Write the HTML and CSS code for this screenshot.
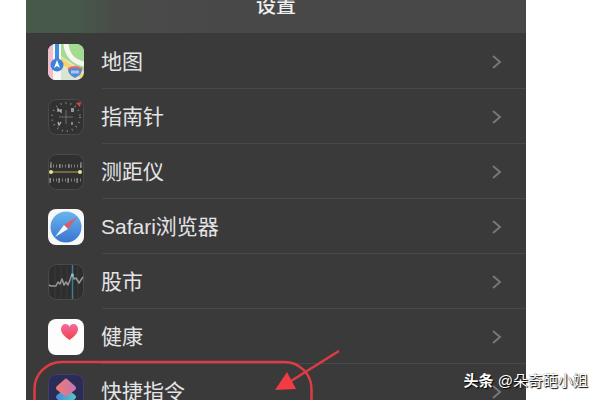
FILE: index.html
```html
<!DOCTYPE html>
<html lang="zh-CN">
  <head>
    <meta charset="utf-8" />
    <meta name="viewport" content="width=device-width, initial-scale=1" />
    <title>设置</title>
    <link rel="stylesheet" href="styles.css">
  </head>
  <body>
    <main class="phone">
      <header class="navbar">
        <h1>设置</h1>
      </header>
      <ul class="settings">
        <li>
          <a href="#maps">
            <svg class="icon" viewBox="0 0 36 36">
              <defs>
                <clipPath id="tile"><rect width="36" height="36" rx="8" /></clipPath>
              </defs>
              <g clip-path="url(#tile)">
                <rect width="36" height="36" fill="#e9e6de" />
                <path d="M13 0H36V28L13 12Z" fill="#a5db91" />
                <path d="M18 0C19 11 26 18 36 20" fill="none" stroke="#f7f7f2" stroke-width="5" />
                <path d="M0 4V36H5V0Z" fill="#f1bdcb" />
                <path d="M13 13L36 31V36L12 19Z" fill="#f5d568" />
                <path d="M13 20L30 36H13Z" fill="#d8e5d2" />
                <path d="M5 0H13V36H5Z" fill="#f6f6f6" />
                <path d="M7 0H11V18H7Z" fill="#3f8be0" />
                <circle cx="9" cy="21" r="6.5" fill="#3b83d9" />
                <path d="M9 16L12 24L9 22L6 24Z" fill="#fff" />
                <path d="M20 25Q27 22 34 25Q34 31 27 34Q20 31 20 25Z" fill="#5288d4" />
                <path d="M20 25Q27 21 34 25" fill="none" stroke="#e2687a" stroke-width="2" />
                <path d="M23 28H31" stroke="#a9c8ee" stroke-width="3" />
              </g>
            </svg>
            <span class="name">地图</span>
            <svg class="chevron" viewBox="0 0 10 16"><path d="M1 2L8 8L1 14" /></svg>
          </a>
        </li>
        <li>
          <a href="#compass">
            <svg class="icon" viewBox="0 0 36 36">
              <rect x="0.5" y="0.5" width="35" height="35" rx="8" fill="#323233" stroke="#4a4a4c" />
              <circle cx="18" cy="18" r="14" fill="none" stroke="#808082" stroke-width="2" stroke-dasharray="1 4" />
              <path d="M11 18H25M18 11V25" stroke="#6c6c6e" />
              <path d="M10 13V10L13 13V10M23 10H26M23 12H26M10 23L11 26L13 23M24 23V26" fill="none" stroke="#b5b5b7" stroke-width="1.3" />
              <path d="M28 4L33 3L32 8Z" fill="#d24a40" />
            </svg>
            <span class="name">指南针</span>
            <svg class="chevron" viewBox="0 0 10 16"><path d="M1 2L8 8L1 14" /></svg>
          </a>
        </li>
        <li>
          <a href="#measure">
            <svg class="icon" viewBox="0 0 36 36">
              <rect x="0.5" y="0.5" width="35" height="35" rx="8" fill="#303031" stroke="#4a4a4c" />
              <path d="M2 12H34M2 26H34" stroke="#808082" stroke-width="3" stroke-dasharray="1 2" />
              <path d="M3 8V14M12 10V14M21 10V14M33 8V14M2 24V29M11 24V29M20 24V29M29 24V29" stroke="#a4a4a6" />
              <path d="M3 18H33" stroke="#83833e" stroke-width="1.5" />
              <circle cx="3" cy="18" r="2" fill="#e4e39a" />
              <circle cx="32" cy="18" r="2" fill="#e4e39a" />
            </svg>
            <span class="name">测距仪</span>
            <svg class="chevron" viewBox="0 0 10 16"><path d="M1 2L8 8L1 14" /></svg>
          </a>
        </li>
        <li>
          <a href="#safari">
            <svg class="icon" viewBox="0 0 36 36">
              <defs>
                <linearGradient id="sky" x2="0" y2="1">
                  <stop stop-color="#68b5ee" />
                  <stop offset="1" stop-color="#3976cf" />
                </linearGradient>
              </defs>
              <rect width="36" height="36" rx="8" fill="#f8f8f8" />
              <circle cx="18" cy="18" r="15.5" fill="url(#sky)" />
              <path d="M29 8L16 16L20 20Z" fill="#dd5b62" />
              <path d="M7 28L16 16L20 20Z" fill="#f4f8fc" />
            </svg>
            <span class="name">Safari浏览器</span>
            <svg class="chevron" viewBox="0 0 10 16"><path d="M1 2L8 8L1 14" /></svg>
          </a>
        </li>
        <li>
          <a href="#stocks">
            <svg class="icon" viewBox="0 0 36 36">
              <rect x="0.5" y="0.5" width="35" height="35" rx="8" fill="#2e2e2f" stroke="#4a4a4c" />
              <path d="M7 2V34M13 2V34M19 2V34M30 2V34" stroke="#3b3b3d" />
              <path d="M24.5 1V35" stroke="#3b7f94" stroke-width="1.5" />
              <path d="M1 21L3 22H8L10 18L12 20L14 15L16 21L18 18L20 21L22 16L24 10L26 15L28 14L31 19L35 13" fill="none" stroke="#98989b" stroke-width="1.5" stroke-linejoin="round" />
              <circle cx="24.5" cy="11" r="1.5" fill="#86bdd6" />
            </svg>
            <span class="name">股市</span>
            <svg class="chevron" viewBox="0 0 10 16"><path d="M1 2L8 8L1 14" /></svg>
          </a>
        </li>
        <li>
          <a href="#health">
            <svg class="icon" viewBox="0 0 36 36">
              <defs>
                <linearGradient id="heart" x2="0" y2="1">
                  <stop stop-color="#f26aa0" />
                  <stop offset="1" stop-color="#ee4748" />
                </linearGradient>
              </defs>
              <rect width="36" height="36" rx="8" fill="#fdfdfd" />
              <path d="M21.5 21C16 17 13 14 13 10C13 7 15 5 17.5 5C19.5 5 21 6 21.5 8C22 6 23.5 5 25.5 5C28 5 30 7 30 10C30 14 27 17 21.5 21Z" fill="url(#heart)" />
            </svg>
            <span class="name">健康</span>
            <svg class="chevron" viewBox="0 0 10 16"><path d="M1 2L8 8L1 14" /></svg>
          </a>
        </li>
        <li>
          <a href="#shortcuts">
            <svg class="icon" viewBox="0 0 36 36">
              <defs>
                <linearGradient id="top-layer">
                  <stop stop-color="#f07b70" />
                  <stop offset="1" stop-color="#c575b4" />
                </linearGradient>
                <linearGradient id="bottom-layer">
                  <stop stop-color="#4388e0" />
                  <stop offset="1" stop-color="#55c9be" />
                </linearGradient>
              </defs>
              <rect x="0.5" y="0.5" width="35" height="35" rx="8" fill="#2b2d57" stroke="#3e4070" />
              <path d="M9 21L18 14L27 21Q29 23 27 25L19 31Q18 32 17 31L9 25Q7 23 9 21Z" fill="url(#bottom-layer)" />
              <path d="M9 12L17 5Q18 4 19 5L27 12Q29 14 27 16L19 22Q18 23 17 22L9 16Q7 14 9 12Z" fill="url(#top-layer)" />
            </svg>
            <span class="name">快捷指令</span>
            <svg class="chevron" viewBox="0 0 10 16"><path d="M1 2L8 8L1 14" /></svg>
          </a>
          <!-- red marker and arrow over the row -->
          <svg class="marker" viewBox="0 0 310 80">
            <rect x="1.5" y="12" width="277" height="64" rx="27" />
            <path d="M306 1L258 31" />
            <path class="arrow-head" d="M242 40L254 22L263 39Z" />
          </svg>
        </li>
      </ul>
    </main>
    <p class="watermark"><b>头条</b> @朵奇葩小姐</p>
  </body>
</html>
```

FILE: styles.css
```css
* {
  box-sizing: border-box;
}
body {
  margin: 0;
  background: #fff;
  font-family: "Liberation Sans", "Noto Sans CJK SC", sans-serif;
}
.phone {
  height: 100vh;
  margin: 0 74px 0 26px;
  overflow: hidden;
  background: #3a3a3b;
}
.navbar {
  height: 33px;
  background: linear-gradient(to right, #465a49 0, #475949 50px, #494b49 90px, #484848 200px);
}
.navbar h1 {
  margin: 0;
  color: #f0f0f0;
  font-size: 20px;
  font-weight: 500;
  line-height: 12px;
  text-align: center;
}
.settings {
  margin: 0;
  padding: 1px 0 0;
  list-style: none;
}
.settings li {
  position: relative;
}
.settings a {
  display: flex;
  align-items: center;
  height: 55px;
  padding: 0 24px 0 22px;
  color: #e4e4e5;
  text-decoration: none;
  background: linear-gradient(#48484a, #48484a) 76px 100% / 100% 1px no-repeat;
}
.icon {
  width: 36px;
  height: 36px;
  margin-right: 17px;
}
.name {
  flex: 1;
  font-size: 21px;
  line-height: 30px;
}
.chevron {
  width: 10px;
  height: 16px;
  fill: none;
  stroke: #77777a;
  stroke-width: 2;
}
.marker {
  position: absolute;
  top: -14px;
  left: 7px;
  width: 310px;
  height: 80px;
  fill: none;
  stroke: #dc3c44;
  stroke-width: 2.5;
}
.marker .arrow-head {
  fill: #f23c43;
  stroke: none;
}
.watermark {
  position: absolute;
  right: 12px;
  bottom: 8px;
  margin: 0;
  color: #fff;
  font-size: 15px;
  line-height: 22px;
  text-shadow: 1px 1px 1px #000, 0 0 1px #333;
}
```
